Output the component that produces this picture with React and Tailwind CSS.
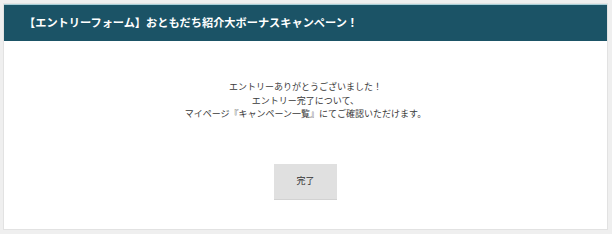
import React from "react";

export default function App() {
  return (
    <div
      className="w-[612px] h-[234px] bg-[#efefef] pt-[3px] pl-[3px] pr-[4px] pb-[4px]"
      style={{ fontFamily: '"Noto Sans CJK JP", "Noto Sans", sans-serif' }}
    >
      <div className="h-[227px] bg-white border border-[#e2e2e2] flex flex-col">
        {/* Header */}
        <div className="h-[37px] bg-[#1b5366] border-t border-[#a9cfd8] flex items-center pl-[20px]">
          <h2 className="text-white text-[11.2px] font-bold leading-none">
            【エントリーフォーム】おともだち紹介大ボーナスキャンペーン！
          </h2>
        </div>

        {/* Body */}
        <div className="flex-1 flex flex-col items-center pt-[39px]">
          <p className="text-[#3a3a3a] text-[9px] leading-[13.5px] text-center">
            エントリーありがとうございました！
            <br />
            エントリー完了について、
            <br />
            マイページ『キャンペーン一覧』にてご確認いただけます。
          </p>
          <button className="mt-[43px] w-[63px] h-[36px] bg-[#e0e0e0] border-b border-[#d2d2d2] text-[#333333] text-[9px]">
            完了
          </button>
        </div>
      </div>
    </div>
  );
}
